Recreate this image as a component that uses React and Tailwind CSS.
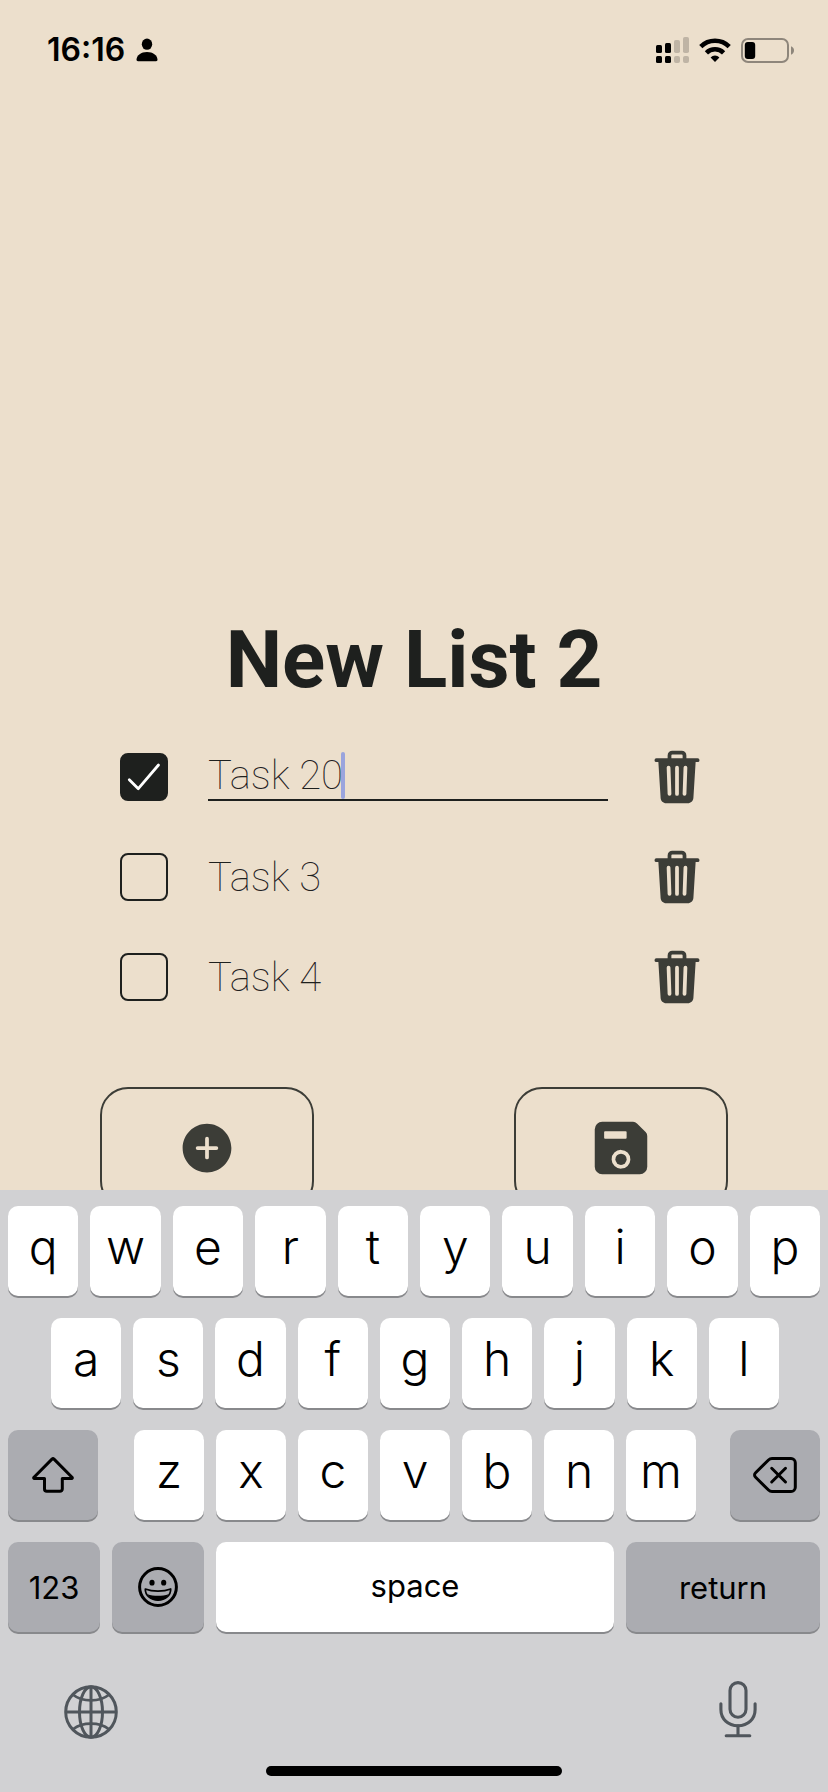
import { useState } from "react";
import { IoAddCircle, IoSave, IoTrash } from "react-icons/io5";

const INITIAL_TASKS = [
  { id: 1, text: "Task 20", done: true, editing: true },
  { id: 2, text: "Task 3", done: false, editing: false },
  { id: 3, text: "Task 4", done: false, editing: false },
];

function StatusBar() {
  return (
    <header className="flex h-[100px] shrink-0 items-center justify-between pr-[34px] pl-[47px] text-black">
      <div className="flex items-center gap-[11px]">
        <time className="text-[32px] leading-10 font-semibold">16:16</time>
        <svg className="h-6 w-[22px]" viewBox="0 0 22 24" fill="currentColor" aria-hidden="true">
          <ellipse cx="11" cy="6.2" rx="5.2" ry="5.6" />
          <path d="M.5 21.6C.8 17.2 5 14 11 14s10.200 3.200 10.500 7.600c0 1-.5 1.600-1.500 1.600H2c-1 0-1.500-.6-1.500-1.600Z" />
        </svg>
      </div>
      <div className="flex items-center gap-[10px]">
        <svg className="h-[26px] w-[33px]" viewBox="0 0 33 26" aria-hidden="true">
          <g fill="#000">
            <rect x="0" y="8" width="6" height="8" rx="1.500" />
            <rect x="9" y="6" width="6" height="10" rx="1.500" />
            <rect x="0" y="19" width="6" height="7" rx="1.500" />
            <rect x="9" y="19" width="6" height="7" rx="1.500" />
          </g>
          <g fill="#bfb4a5">
            <rect x="18" y="3" width="6" height="13" rx="1.800" />
            <rect x="27" y="0" width="6" height="16" rx="1.800" />
            <rect x="18" y="19" width="6" height="7" rx="2" />
            <rect x="27" y="19" width="6" height="7" rx="2" />
          </g>
        </svg>
        <svg className="h-6 w-8" viewBox="0 0 32 24" fill="none" stroke="#000" strokeWidth="4.600" aria-hidden="true">
          <path d="M1.800 8.600a20.300 20.300 0 0 1 28.400 0" />
          <path d="M7.400 14.800a12.300 12.300 0 0 1 17.200 0" />
          <path d="M11.600 19.400a6.300 6.300 0 0 1 8.800 0L16 24Z" fill="#000" stroke="none" />
        </svg>
        <svg className="h-[25px] w-[53px]" viewBox="0 0 53 25" aria-hidden="true">
          <rect x="1" y="1" width="46" height="23" rx="6" fill="none" stroke="#8e867b" strokeWidth="2" />
          <rect x="3.800" y="4" width="10.400" height="17" rx="3" fill="#000" />
          <path d="M50 8.300c2 .8 3 2.300 3 4.200s-1 3.400-3 4.200Z" fill="#8e867b" />
        </svg>
      </div>
    </header>
  );
}

function TaskRow({ task, onToggle, onChange, onDelete }) {
  return (
    <li className="flex h-[100px] items-center">
      <div className="relative size-12 shrink-0">
        <input
          type="checkbox"
          aria-label={`Mark ${task.text} as done`}
          checked={task.done}
          onChange={onToggle}
          className="block size-12 appearance-none rounded-lg border-2 border-[#1e201e] checked:bg-[#1e201e]"
        />
        {task.done && (
          <svg
            className="pointer-events-none absolute inset-0 size-12"
            viewBox="0 0 48 48"
            fill="none"
            stroke="#fff"
            strokeWidth="2.800"
            strokeLinecap="round"
            strokeLinejoin="round"
            aria-hidden="true"
          >
            <path d="M9.300 26.700 18.300 35.700 38.500 12" />
          </svg>
        )}
      </div>
      <div className="relative ml-10 min-w-0 flex-1">
        <input
          type="text"
          aria-label="Task name"
          value={task.text}
          onChange={(e) => onChange(e.target.value)}
          className={
            "block h-12 w-full bg-transparent font-[Roboto,sans-serif] text-[40px] leading-[48px] font-thin text-[#1e201e] caret-transparent outline-none " +
            (task.editing ? "border-b-2 border-[#1e201e]" : "pt-0.5")
          }
        />
        {task.editing && (
          <span className="absolute -top-px left-[133px] h-[47px] w-1 rounded-full bg-[#9aa4dd]" aria-hidden="true" />
        )}
      </div>
      <button type="button" aria-label={`Delete ${task.text}`} onClick={onDelete} className="ml-[39px] shrink-0 text-[#3c3d37]">
        <IoTrash size={60} />
      </button>
    </li>
  );
}

function ActionButton({ label, children }) {
  return (
    <button
      type="button"
      aria-label={label}
      className="flex h-[122px] w-[214px] items-center justify-center rounded-[28px] border-2 border-[#3c3d37] text-[#3c3d37]"
    >
      {children}
    </button>
  );
}

const KEY_BASE = "flex h-[90px] items-center justify-center rounded-[10px] text-black shadow-[0_2px_0_#88898c] ";

function LetterKeys({ letters }) {
  return letters.split("").map((letter) => (
    <button key={letter} type="button" className={KEY_BASE + "min-w-0 flex-1 bg-white pb-2 text-[48px] leading-none font-[360]"}>
      {letter}
    </button>
  ));
}

function ControlKey({ label, className, children }) {
  return (
    <button type="button" aria-label={label} className={KEY_BASE + "bg-[#abacb1] text-[31px] leading-none " + className}>
      {children}
    </button>
  );
}

function Keyboard() {
  return (
    <section aria-label="Keyboard" className="relative flex shrink-0 flex-col bg-[#d1d1d3] px-2 pt-4 pb-4">
      <div className="flex flex-col gap-[22px]">
        <div className="flex gap-3">
          <LetterKeys letters="qwertyuiop" />
        </div>
        <div className="flex gap-3 pr-[41px] pl-[43px]">
          <LetterKeys letters="asdfghjkl" />
        </div>
        <div className="flex">
          <ControlKey label="Shift" className="w-[90px] shrink-0">
            <svg className="h-9 w-[42px]" viewBox="0 0 42 36" fill="none" stroke="currentColor" strokeWidth="3" strokeLinejoin="round" aria-hidden="true">
              <path d="M20 2.100a1.500 1.500 0 0 1 2 0L40 20.200c.6.700.3 1.300-.5 1.300h-9.200V32a2.300 2.300 0 0 1-2.300 2.300H14.800a2.300 2.300 0 0 1-2.300-2.300V21.500h-10c-.8 0-1.100-.6-.5-1.300Z" />
            </svg>
          </ControlKey>
          <div className="flex min-w-0 flex-1 gap-3 pr-[34px] pl-9">
            <LetterKeys letters="zxcvbnm" />
          </div>
          <ControlKey label="Delete" className="w-[90px] shrink-0">
            <svg className="h-9 w-11" viewBox="0 0 44 36" fill="none" stroke="currentColor" strokeWidth="3" strokeLinecap="round" strokeLinejoin="round" aria-hidden="true">
              <path d="M19 1.500h19a4.300 4.300 0 0 1 4.300 4.300v24.400a4.300 4.300 0 0 1-4.300 4.300H19c-1.500 0-2.500-.5-3.500-1.500L2.600 20.200c-1.400-1.400-1.400-3 0-4.400L15.500 3c1-1 2-1.500 3.500-1.500Z" />
              <path d="M18.700 11.300 32.500 25M32.500 11.300 18.700 25" />
            </svg>
          </ControlKey>
        </div>
        <div className="flex gap-3">
          <ControlKey label="Numbers" className="w-[92px] shrink-0">
            123
          </ControlKey>
          <ControlKey label="Emoji" className="w-[92px] shrink-0">
            <svg className="size-10" viewBox="0 0 40 40" fill="none" stroke="currentColor" aria-hidden="true">
              <circle cx="20" cy="20" r="18.400" strokeWidth="3" />
              <ellipse cx="14" cy="15.700" rx="2.600" ry="2.900" fill="currentColor" stroke="none" />
              <ellipse cx="25.700" cy="15.700" rx="2.600" ry="2.900" fill="currentColor" stroke="none" />
              <path d="M7.300 22c3.700 1.500 8.200 2.200 12.700 2.200s9-.7 12.700-2.200c.2 6.200-5.400 11.200-12.700 11.200S7.100 28.200 7.300 22Z" strokeWidth="1.700" strokeLinejoin="round" />
              <path d="M9.500 27.300c3 1 6.700 1.500 10.500 1.500s7.500-.5 10.500-1.500C28.600 31 24.700 33.200 20 33.200S11.400 31 9.500 27.300Z" fill="currentColor" stroke="none" />
            </svg>
          </ControlKey>
          <button type="button" className={KEY_BASE + "min-w-0 flex-1 bg-white pb-1 text-[31px] leading-none"}>
            space
          </button>
          <ControlKey label="Return" className="w-[194px] shrink-0">
            return
          </ControlKey>
        </div>
      </div>
      <div className="mt-[49px] flex items-center justify-between pr-[55px] pl-14 text-[#50565c]">
        <button type="button" aria-label="Next keyboard" className="mt-1">
          <svg className="size-[54px]" viewBox="0 0 54 54" fill="none" stroke="currentColor" strokeWidth="3" aria-hidden="true">
            <circle cx="27" cy="27" r="25.300" />
            <ellipse cx="27" cy="27" rx="11.500" ry="25.300" />
            <path d="M27 1.700v50.600M1.700 27h50.600" />
            <path d="M9 9.800c4.600 3.600 11 5.600 18 5.600s13.400-2 18-5.600M9 44.200c4.600-3.600 11-5.600 18-5.600s13.400 2 18 5.600" strokeWidth="2.700" />
          </svg>
        </button>
        <button type="button" aria-label="Dictate" className="mr-2">
          <svg className="h-[58px] w-[38px]" viewBox="0 0 38 58" fill="none" stroke="currentColor" strokeWidth="3.100" strokeLinecap="round" aria-hidden="true">
            <rect x="11" y="1.600" width="16" height="34.600" rx="8" />
            <path d="M1.900 22.800v5.700c0 9.400 7 16.200 17.100 16.200s17.100-6.800 17.100-16.200v-5.700" />
            <path d="M19 44.700v10M7.200 54.700h23.600" />
          </svg>
        </button>
      </div>
      <div className="mx-auto mt-[27px] h-[10px] w-[296px] rounded-full bg-black" />
    </section>
  );
}

export default function App() {
  const [tasks, setTasks] = useState(INITIAL_TASKS);
  const update = (id, patch) => setTasks((list) => list.map((t) => (t.id === id ? { ...t, ...patch } : t)));

  return (
    <div className="flex h-screen flex-col overflow-hidden bg-[#ecdfcc] font-[Inter,sans-serif]">
      <StatusBar />
      <main className="flex min-h-0 flex-1 flex-col justify-end overflow-hidden px-[100px]">
        <h1 className="mb-[27px] text-center font-[Roboto,sans-serif] text-[80px] leading-[80px] font-bold text-[#1e201e]">New List 2</h1>
        <ul className="pr-[21px] pl-5">
          {tasks.map((task) => (
            <TaskRow
              key={task.id}
              task={task}
              onToggle={() => update(task.id, { done: !task.done })}
              onChange={(text) => update(task.id, { text })}
              onDelete={() => setTasks((list) => list.filter((t) => t.id !== task.id))}
            />
          ))}
        </ul>
        <div className="mt-[60px] -mb-[19px] flex shrink-0 justify-between">
          <ActionButton label="Add task">
            <IoAddCircle size={60} />
          </ActionButton>
          <ActionButton label="Save list">
            <IoSave size={60} />
          </ActionButton>
        </div>
      </main>
      <Keyboard />
    </div>
  );
}
